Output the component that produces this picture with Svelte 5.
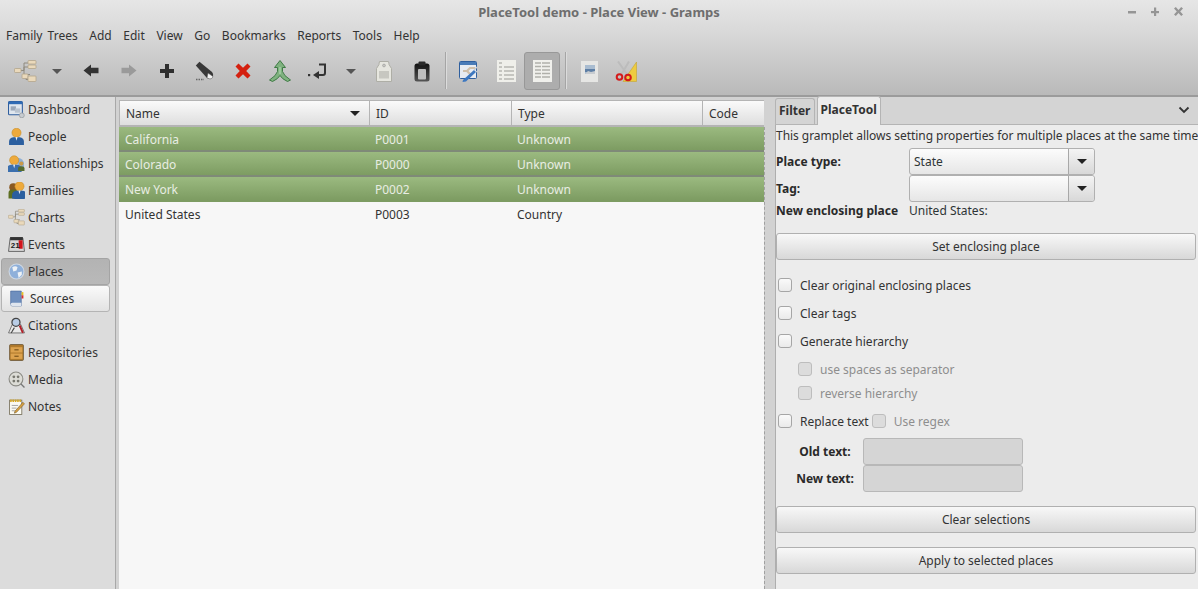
<script>
  const menus = ['Family Trees','Add','Edit','View','Go','Bookmarks','Reports','Tools','Help'];
  const nav = [
    ['Dashboard','dash'],['People','people'],['Relationships','rel'],['Families','fam'],['Charts','chart'],['Events','event'],
    ['Places','place'],['Sources','source'],['Citations','cite'],['Repositories','repo'],['Media','media'],['Notes','note']
  ];
  const rows = [
    ['California','P0001','Unknown',true],
    ['Colorado','P0000','Unknown',true],
    ['New York','P0002','Unknown',true],
    ['United States','P0003','Country',false]
  ];
</script>

{#snippet treeShapes()}
  <path d="M7 10.500h3M10 10.500V3h4M10 10.500V7h6M10 10.500V16h2M12 16v-1.500h4M12 16v3.500h3" fill="none" stroke="#8f8a7e" stroke-width="1"/>
  <g fill="#ead9bb" stroke="#b3a58c" stroke-width=".8">
    <rect x=".5" y="8.500" width="6.500" height="4" rx=".8"/>
    <rect x="14" y=".5" width="8" height="3.500" rx=".8"/><rect x="14" y="5" width="8" height="3.500" rx=".8"/>
    <rect x="8" y="14" width="6" height="4.500" rx=".8"/>
    <rect x="14" y="16" width="8" height="5.500" rx=".8"/>
  </g>
{/snippet}

{#snippet person(x, y, body, head)}
  <circle cx={x} cy={y} r="4.300" fill={head} stroke="#c08a26" stroke-width=".5"/>
  <path d="M{x-7} {y+11.500}v-3q0-3.800 4-4.300h6q4 .5 4 4.300v3q-7 1.500-14 0z" fill={body}/>
  <path d="M{x-1} {y+4}h2l-1 3.500z" fill="#e8eef5"/>
{/snippet}

{#snippet navIcon(k)}
  <svg class="ni" width="17" height="17" viewBox="0 0 16 16">
    {#if k==='dash'}
      <rect x=".5" y=".5" width="13" height="12.500" rx="1" fill="#dfe6ee" stroke="#2f5e9e"/>
      <rect x=".5" y=".5" width="13" height="2.500" fill="#2f6bb5"/>
      <rect x="2.500" y="5" width="5" height="4" fill="#9aa7b8"/><rect x="6.500" y="7" width="5" height="4" fill="#b8c2ce"/>
      <circle cx="13" cy="13.500" r="2.300" fill="#c8ccd0" stroke="#9a9ea3" stroke-width=".8"/>
    {:else if k==='people'}
      {@render person(8,4.500,'#2c5f9f','#eeaa3c')}
    {:else if k==='rel'}
      <path d="M9 2.500a6 6 0 0 1 6 6v6H9z" fill="#8fb0d5"/>
      {@render person(5.800,5,'#3b6fae','#eeaa3c')}
      <circle cx="12.500" cy="8" r="2" fill="#c99a4a"/><path d="M9.500 15v-2.500q0-2 3-2t3 2V15z" fill="#556b2f"/>
    {:else if k==='fam'}
      <circle cx="5" cy="5" r="3.800" fill="#8a5a22"/><path d="M.5 15.500V10q0-3 4.500-3t4 3v5.500z" fill="#5d6f22"/>
      {@render person(10.800,4,'#2c5f9f','#eeaa3c')}
    {:else if k==='chart'}
      <g transform="scale(.7)">{@render treeShapes()}</g>
    {:else if k==='event'}
      <path d="M.5 14.500 2 2h12l1.500 12.500z" fill="#d8d8d8" stroke="#555" stroke-width=".8"/>
      <rect x="2" y="1" width="12" height="3" fill="#333"/>
      <rect x="10" y="4" width="3.800" height="8" fill="#d2141a"/>
      <text x="2.600" y="11.500" font-size="7.500" font-weight="700" fill="#222" font-family="Liberation Sans">21</text>
    {:else if k==='place'}
      <circle cx="8" cy="8" r="7" fill="#8fb0da" stroke="#cfd8e3"/>
      <path d="M4 4q3-2 5 0l-1 3-3 1zM9 9l4-1 0 3-3 3z" fill="#eef2f6"/>
    {:else if k==='source'}
      <path d="M2.500 1h10v14H4Q2.500 15 2.500 13.500z" fill="#6f8fbe" stroke="#4a6a9c" stroke-width=".6"/>
      <path d="M2.500 13.500Q2.500 12 4 12h8.500v3H4q-1.500 0-1.500-1.500z" fill="#dfe5ee"/>
      <rect x="12.800" y="2" width="1.700" height="3" fill="#e8c020"/><rect x="12.800" y="5" width="1.700" height="3" fill="#d83030"/>
    {:else if k==='cite'}
      <path d="M.5 15 4 7h8l3.500 8z" fill="#e8e8e8" stroke="#666" stroke-width=".8"/>
      <circle cx="7.500" cy="5" r="3.800" fill="#b9cde6" stroke="#444" stroke-width="1.200"/>
      <path d="M11 8l3 7" stroke="#b3202a" stroke-width="1.800"/><path d="M3 15l3-5" stroke="#444" stroke-width="1"/>
    {:else if k==='repo'}
      <rect x="1.500" y=".5" width="13" height="15" rx="1" fill="#b07a2c" stroke="#6e5a3a" stroke-width=".8"/>
      <rect x="2.500" y="3" width="11" height="5" fill="#dca24e"/><rect x="2.500" y="9" width="11" height="5" fill="#dca24e"/>
      <rect x="6" y="5" width="4" height="1" fill="#6e4a16"/><rect x="6" y="11" width="4" height="1" fill="#6e4a16"/>
    {:else if k==='media'}
      <circle cx="7.500" cy="7.500" r="6.500" fill="#dcdcd6" stroke="#8a8a84"/>
      <circle cx="5.500" cy="5.500" r="1.300" fill="#77776f"/><circle cx="9.500" cy="5.500" r="1.300" fill="#77776f"/>
      <circle cx="5.500" cy="9.500" r="1.300" fill="#77776f"/><circle cx="9.500" cy="9.500" r="1.300" fill="#77776f"/>
      <path d="M12 12l3.500 3.500" stroke="#777" stroke-width="1.200"/>
    {:else if k==='note'}
      <rect x="1.500" y="2" width="11.500" height="13.500" fill="#fbfaf2" stroke="#77705a" stroke-width=".8"/>
      <path d="M2 2.500h11" stroke="#d8a820" stroke-width="2.400" stroke-dasharray="1.500 .7"/>
      <path d="M3.500 7h6M3.500 9.500h4.500M3.500 12h3.500" stroke="#999" stroke-width=".8"/>
      <path d="M6.500 12.500 14 4l1.500 1.500L8 13.500l-2 .8z" fill="#d8a040" stroke="#6a5020" stroke-width=".5"/>
    {/if}
  </svg>
{/snippet}

{#snippet caret(c)}<span class="caret" style:border-top-color={c}></span>{/snippet}

<div class="app">
  <header class="top">
    <div class="title">
      <span>PlaceTool demo - Place View - Gramps</span>
      <div class="wm">
        <svg width="64" height="12" viewBox="0 0 64 12" fill="#959595">
          <rect x="1" y="5" width="8" height="2.500"/>
          <rect x="24" y="5" width="8" height="2.200"/><rect x="27" y="1.500" width="2.200" height="8.500"/>
          <path d="M47 2.500l1.800-1.500 2.700 3 2.700-3 1.800 1.500-2.800 3 2.800 3-1.800 1.500-2.700-3-2.700 3L47 8.500l2.800-3z"/>
        </svg>
      </div>
    </div>
    <nav class="menu">
      {#each menus as m}<span>{m}</span>{/each}
    </nav>
    <div class="toolbar">
      <div class="tb t1"><svg width="23" height="23" viewBox="0 0 23 23">{@render treeShapes()}</svg></div>
      <div class="tb t2">{@render caret('#555')}</div>
      <div class="tb t3"><svg width="16" height="14" viewBox="0 0 16 14"><path d="M.5 6.500 8 .5v3.300h7.500v5.500H8V12.500z" fill="#333"/></svg></div>
      <div class="tb t4"><svg width="16" height="14" viewBox="0 0 16 14"><path d="M15.500 6.500 8 .5v3.300H.5v5.500H8V12.500z" fill="#9a9a9a"/></svg></div>
      <div class="tb t5"><svg width="16" height="16" viewBox="0 0 16 16"><path d="M6 1h4v5h5v4h-5v5H6v-5H1V6h5z" fill="#2f2f2f"/></svg></div>
      <div class="tb t6"><svg width="20" height="20" viewBox="0 0 20 20"><path d="M.8 4.500 4.500.8 17 11q1.800 2 1 4.500L15.500 18l-3.500-1z" fill="#383838"/><path d="M12 17l1-5 5 3.500q-.8 2.500-3 2.500z" fill="#f2f2f2" stroke="#555" stroke-width=".5"/><path d="M1 18.500h8" stroke="#666" stroke-dasharray="1.500 1" stroke-width="1.300"/></svg></div>
      <div class="tb t7"><svg width="16" height="16" viewBox="0 0 16 16"><path d="M3.500.5 8 4.800 12.500.5l3 3L11.200 8l4.300 4.500-3 3L8 11.200l-4.500 4.300-3-3L4.800 8 .5 3.500z" fill="#d4200f"/></svg></div>
      <div class="tb t8"><svg width="22" height="22" viewBox="0 0 22 22"><path d="M11 .5 16.500 7.500h-3v4q1 4 8 8.500l-3 1.500Q13 19 11 15.500 9 19 3.500 21.500L.5 20q7-4.500 8-8.500v-4h-3z" fill="#7fb27f" stroke="#3f7a45" stroke-width="1"/><path d="M11 7v7" stroke="#a6cfa6" stroke-width="1.500"/></svg></div>
      <div class="tb t9"><svg width="19" height="17" viewBox="0 0 19 17"><path d="M11 1.500h6V10q0 2-2 2H10" fill="none" stroke="#333" stroke-width="2"/><path d="M11 8v8L5 12z" fill="#333"/><rect x="0" y="11" width="2.200" height="2.200" fill="#333"/></svg></div>
      <div class="tb t10">{@render caret('#555')}</div>
      <div class="tb t11"><svg width="16" height="21" viewBox="0 0 16 21"><path d="M3.500.5h9q.5 2 .5 3l2.500 4v13H.5V7.500l2.500-4q0-1 .5-3z" fill="#e6e6df" stroke="#aeaea6"/><circle cx="8" cy="4.500" r="1.400" fill="#c8c8c2" stroke="#999" stroke-width=".6"/><path d="M4 10v7.500M6 10v7.500M8 10v7.500M10 10v7.500M12 10v7.500" stroke="#a8a8a2"/></svg></div>
      <div class="tb t12"><svg width="16" height="21" viewBox="0 0 16 21"><defs><linearGradient id="clip" x1="0" y1="0" x2="0" y2="1"><stop offset="0" stop-color="#111"/><stop offset="1" stop-color="#555"/></linearGradient></defs><rect x=".5" y="2.500" width="15" height="18" rx="2.500" fill="url(#clip)"/><rect x="4.500" y=".5" width="7" height="4" rx="1" fill="#2a2a2a"/><rect x="4" y="8" width="8" height="10.500" rx="1" fill="#bdbdbd"/></svg></div>
      <div class="sep s1"></div>
      <div class="tb t13"><svg width="21" height="21" viewBox="0 0 21 21"><rect x=".5" y=".5" width="17" height="17" rx="1" fill="#e8ecf2" stroke="#2f5f9e"/><rect x="1" y="1" width="16" height="3" fill="#4a7cb8"/><path d="M4 10h4l3-3h5M8 10l4 4" stroke="#d0c0aa" stroke-width="2.200" fill="none"/><path d="M4 19l11-10 2 2L7 20.500l-3.500.5z" fill="#3e78c0"/><path d="M15 9l3-3M17 11l3-2" stroke="#c8ccd2" stroke-width="1.300"/></svg></div>
      <div class="tb t14"><svg width="19" height="22" viewBox="0 0 19 22"><rect width="19" height="22" fill="#efefea"/><path d="M2 3h3M2 7h3M7 7h10M2 11h3M7 11h10M2 15h3M7 15h10M2 19h3M7 19h10" stroke="#b8b8b2" stroke-width="1.500"/></svg></div>
      <div class="tb active t15"><svg width="19" height="22" viewBox="0 0 19 22"><rect width="19" height="22" fill="#f0f0ec"/><path d="M2 3h15M2 6.500h15M2 10h15M2 13.500h15M2 17h15" stroke="#b0b0aa" stroke-width="1.500"/><path d="M8.500 2v16" stroke="#f0f0ec"/></svg></div>
      <div class="sep s2"></div>
      <div class="tb t16"><svg width="18" height="21" viewBox="0 0 18 21"><rect width="17" height="21" fill="#e6e6e4"/><rect x="4" y="4" width="10" height="9" fill="#a9bcd0"/><rect x="4" y="8" width="10" height="3" fill="#5e7fa5"/><path d="M4 13l3-3 3 1 4-1v3z" fill="#c8ccd0"/></svg></div>
      <div class="tb t17"><svg width="22" height="21" viewBox="0 0 22 21"><path d="M21.500 1v19.500H8z" fill="#eecb40" stroke="#c4a430" stroke-width=".6"/><path d="M3 .5l10 14M14 .5 6 14" stroke="#bcbcbc" stroke-width="2"/><circle cx="4.500" cy="16" r="2.800" fill="none" stroke="#d41a1a" stroke-width="2"/><circle cx="13" cy="16.500" r="2.800" fill="none" stroke="#d41a1a" stroke-width="2"/></svg></div>
    </div>
  </header>

  <main class="body">
    <aside class="side">
      {#each nav as [label, icon]}
        <div class="nav" class:pressed={label==='Places'} class:raised={label==='Sources'}>
          {@render navIcon(icon)}<span>{label}</span>
        </div>
      {/each}
    </aside>

    <section class="list">
      <div class="thead">
        <div class="th c1">Name {@render caret('#222')}</div>
        <div class="th c2">ID</div>
        <div class="th c3">Type</div>
        <div class="th c4">Code</div>
      </div>
      {#each rows as r}
        <div class="tr" class:sel={r[3]}>
          <div class="td c1">{r[0]}</div>
          <div class="td c2">{r[1]}</div>
          <div class="td c3">{r[2]}</div>
          <div class="td c4"></div>
        </div>
      {/each}
    </section>

    <div class="gutter"></div>

    <section class="panel">
      <div class="tabs">
        <div class="tab">Filter</div>
        <div class="tab on">PlaceTool</div>
        <svg class="chev" width="12" height="8" viewBox="0 0 12 8"><path d="M1.500 1.500 6 6l4.500-4.500" fill="none" stroke="#333" stroke-width="1.800"/></svg>
      </div>
      <div class="content">
        <p class="intro">This gramplet allows setting properties for multiple places at the same time</p>
        <div class="formgrid">
          <b>Place type:</b>
          <div class="combo"><span class="val">State</span><i>{@render caret('#222')}</i></div>
          <b>Tag:</b>
          <div class="combo"><span class="val"></span><i>{@render caret('#222')}</i></div>
          <b class="enc">New enclosing place</b>
          <span class="enc">United States:</span>
        </div>
        <button class="btn first">Set enclosing place</button>
        <div class="checks">
          <label class="ck"><i></i>Clear original enclosing places</label>
          <label class="ck"><i></i>Clear tags</label>
          <label class="ck"><i></i>Generate hierarchy</label>
          <label class="ck sub dis"><i></i>use spaces as separator</label>
          <label class="ck sub dis short"><i></i>reverse hierarchy</label>
          <div class="ck rep"><label class="ck"><i></i>Replace text</label><label class="ck dis"><i></i>Use regex</label></div>
        </div>
        <div class="entries">
          <b>Old text:</b><div class="entry"></div>
          <b>New text:</b><div class="entry"></div>
        </div>
        <button class="btn b2">Clear selections</button>
        <button class="btn b3">Apply to selected places</button>
      </div>
    </section>
  </main>
</div>

<style>
  :global(body) { margin: 0; overflow: hidden; background: #ececec; }
  .app { width: 1198px; height: 589px; overflow: hidden; display: flex; flex-direction: column; font: 12px/17px "Noto Sans", sans-serif; color: #2e3436; }
  .top { height: 95px; flex: none; background: linear-gradient(#e6e6e6, #d6d6d6 40%, #b9b9b9); border-bottom: 2px solid #9b9b9b; display: flex; flex-direction: column; }
  .title { height: 25px; position: relative; display: flex; align-items: center; justify-content: center; font-weight: 700; color: #6e6e6e; font-size: 13px; }
  .wm { position: absolute; right: 7px; top: 6px; line-height: 0; }
  .menu { height: 21px; display: flex; align-items: center; gap: 11.6px; word-spacing: 2px; padding-left: 6px; color: #333; }
  .toolbar { flex: 1; position: relative; }
  .tb { position: absolute; display: flex; align-items: center; justify-content: center; height: 38px; top: 6px; width: 38px; }
  .tb svg { display: block; }
  .caret { display: inline-block; width: 0; height: 0; border: 5px solid transparent; border-bottom: 0; border-top: 5px solid #333; }
  .t1 { left: 6px; } .t2 { left: 38px; } .t3 { left: 72px; } .t4 { left: 110px; } .t5 { left: 148px; } .t6 { left: 186px; }
  .t7 { left: 224px; } .t8 { left: 261px; } .t9 { left: 298px; } .t10 { left: 332px; } .t11 { left: 365px; } .t12 { left: 403px; }
  .t13 { left: 450px; } .t14 { left: 487px; } .t15 { left: 524px; width: 36px; } .t16 { left: 571px; } .t17 { left: 607px; }
  .active { background: #adadad; border: 1px solid #989898; border-radius: 3px; box-sizing: border-box; height: 38px; }
  .sep { position: absolute; top: 6px; width: 1px; height: 37px; background: #a5a5a5; box-shadow: 1px 0 0 #dcdcdc; }
  .s1 { left: 445px; } .s2 { left: 565px; }

  .body { flex: 1; display: flex; min-height: 0; background: #d2d2d2; }
  .side { width: 116px; flex: none; box-sizing: border-box; background: #dcdcdc; border-right: 1px solid #a8a8a8; margin-right: 3px; }
  .nav { height: 27px; display: flex; align-items: center; gap: 3px; padding-left: 7px; box-sizing: border-box; width: 109px; margin-left: 1px; color: #333; }
  .nav .ni { flex: none; }
  .nav:first-child { margin-top: -1px; }
  .pressed { background: linear-gradient(#b3b3b3, #b9b9b9); border: 1px solid #a4a4a4; border-radius: 3px; padding-left: 6px; }
  .raised { background: linear-gradient(#fafafa, #e2e2e2); border: 1px solid #b4b4b4; border-radius: 3px; padding-left: 6px; gap: 5px; }

  .list { width: 645px; flex: none; background: #f7f7f7; margin-top: 3px; }
  .thead { display: flex; height: 27px; box-sizing: border-box; background: linear-gradient(#fafafa, #dedede); border: 1px solid #b4b4b4; border-right: 0; border-bottom-width: 2px; }
  .th { box-sizing: border-box; padding-left: 6px; display: flex; align-items: center; justify-content: space-between; border-right: 1px solid #b4b4b4; color: #333; }
  .th .caret { margin-right: 9px; border-top-color: #222; }
  .c1 { width: 250px; } .c2 { width: 142px; } .c3 { width: 191px; } .c4 { flex: 1; border-right: 0; }
  .tr { display: flex; height: 25px; align-items: center; color: #333; }
  .td { box-sizing: border-box; padding-left: 6px; }
  .sel { background: linear-gradient(#9bba80, #7d9c62); border-bottom: 2px solid #7f8a78; box-sizing: border-box; padding-top: 1px; color: #e8ede3; }
  .sel:nth-child(4) { border-bottom-color: #7d9c62; }

  .gutter { width: 11px; flex: none; box-sizing: border-box; border-left: 1px dashed #a0a0a0; margin-top: 30px; }
  .panel { flex: 1; background: #ececec; min-width: 0; display: flex; flex-direction: column; border-left: 1px solid #aeaeae; }
  .tabs { height: 28px; flex: none; box-sizing: border-box; background: #d4d4d4; border-bottom: 1px solid #b4b4b4; display: flex; align-items: flex-end; position: relative; font-weight: 700; color: #333; margin-left: -1px; }
  .tab { padding: 0 3px 2px; height: 26px; box-sizing: border-box; border: 1px solid #b4b4b4; border-bottom: 0; border-radius: 3px 3px 0 0; display: flex; align-items: center; margin-right: 2px; background: #d4d4d4; }
  .tab.on { background: #ececec; height: 29px; margin-bottom: -1px; padding-bottom: 3px; }
  .chev { position: absolute; right: 8px; top: 9px; }
  .content { flex: 1; }
  .intro { margin: 2px 0 0; height: 17px; white-space: nowrap; color: #333; letter-spacing: -.04px; }
  b { font-weight: 700; color: #2a2a2a; }
  .formgrid { display: grid; grid-template-columns: 133px 186px; align-items: center; margin-top: 4px; }
  .combo { height: 27px; box-sizing: border-box; border: 1px solid #b0b0b0; border-radius: 3px; background: linear-gradient(#fcfcfc, #e6e6e6); display: flex; align-items: center; }
  .val { flex: 1; padding-left: 4px; }
  .combo i { width: 25px; height: 100%; border-left: 1px solid #a8a8a8; display: flex; align-items: center; justify-content: center; background: linear-gradient(#f4f4f4, #d8d8d8); border-radius: 0 3px 3px 0; }
  .enc { height: 20px; line-height: 17px; }
  .btn { display: block; width: 420px; height: 27px; padding: 0; box-sizing: border-box; border: 1px solid #b0b0b0; border-radius: 3px; background: linear-gradient(#f8f8f8, #d8d8d8); font: inherit; color: #333; text-align: center; }
  .first { margin-top: 11px; }
  .checks { margin-top: 11px; padding-left: 2px; }
  .ck { display: flex; align-items: center; height: 28px; color: #333; white-space: nowrap; }
  .ck i { width: 12px; height: 12px; border: 1px solid #a6a6a6; border-radius: 3px; background: linear-gradient(#fafafa, #eaeaea); margin-right: 8px; flex: none; }
  .ck.dis { color: #8e8e8e; }
  .dis i { background: #dcdcdc; border-color: #bdbdbd; }
  .sub { padding-left: 20px; }
  .short { height: 24px; margin-top: -2px; }
  .rep { gap: 3px; margin-top: 2px; }
  .entries { display: grid; grid-template-columns: 76px 160px; padding-left: 11px; justify-items: center; align-items: center; margin-top: 3px; }
  .entry { width: 160px; height: 27px; box-sizing: border-box; border: 1px solid #b8b8b8; border-radius: 3px; background: #d5d5d5; }
  .b2 { margin-top: 14px; }
  .b3 { margin-top: 14px; }
</style>
